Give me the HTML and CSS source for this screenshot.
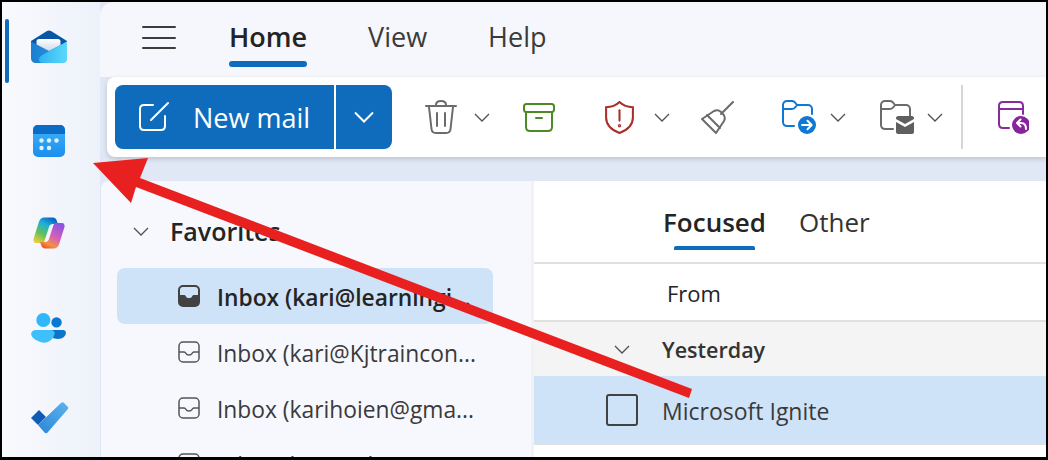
FILE: index.html
```html
<!DOCTYPE html>
<html lang="en">
<head>
<meta charset="utf-8">
<title>Outlook</title>
<link rel="stylesheet" href="styles.css">
</head>
<body>
<div class="app">
  <nav class="rail">
    <span class="rail-marker"></span>
    <a class="rail-item rail-mail">
      <svg width="38" height="34" viewBox="0 0 38 34"><defs><linearGradient id="mf" x1="0" x2="1"><stop offset="0" stop-color="#1b7fd0"/><stop offset="1" stop-color="#2b9be6"/></linearGradient><linearGradient id="mb" x1="0" x2="1"><stop offset="0" stop-color="#2fb4f2"/><stop offset="1" stop-color="#5cd8fb"/></linearGradient><linearGradient id="mp" x1="0" x2="0" y1="0" y2="1"><stop offset="0" stop-color="#fff"/><stop offset="1" stop-color="#c9d6e6"/></linearGradient></defs><path d="M1 11 17 1c1.300-.800 2.700-.800 4 0l16 10v12H1z" fill="#0b56a4"/><path d="M7 9.500c0-1.400 1-2.500 2.500-2.500h19c1.500 0 2.500 1.100 2.500 2.500V20H7z" fill="url(#mp)" transform="translate(-.5 2)"/><path d="M1 11.500 19 21l18-9.500V28c0 3-2 5-5 5H6c-3 0-5-2-5-5z" fill="url(#mf)"/><path d="M37 11.500V28c0 3-2 5-5 5H14c-3 0-5-.800-5-3.500 0-2 1.200-3.500 3-4.300z" fill="url(#mb)"/></svg>
    </a>
    <a class="rail-item rail-cal">
      <svg width="34" height="34" viewBox="0 0 34 34"><defs><linearGradient id="cb" x1="0" x2="0" y1="0" y2="1"><stop offset="0" stop-color="#3fb4f8"/><stop offset="1" stop-color="#1c8eee"/></linearGradient></defs><rect x="1" y="1" width="32" height="32" rx="5" fill="url(#cb)"/><path d="M1 10V6c0-3 2-5 5-5h22c3 0 5 2 5 5v4z" fill="#0a6cc4"/><g fill="#dff3ff"><circle cx="9.500" cy="16.500" r="2.200"/><circle cx="17" cy="16.500" r="2.200"/><circle cx="24.500" cy="16.500" r="2.200"/><circle cx="9.500" cy="24" r="2.200"/><circle cx="17" cy="24" r="2.200"/></g></svg>
    </a>
    <a class="rail-item rail-copilot">
      <svg width="32" height="32" viewBox="0 0 32 32"><defs><linearGradient id="c1" x1=".7" x2=".2" y1="0" y2="1"><stop offset="0" stop-color="#0b63c4"/><stop offset=".3" stop-color="#1fb0d8"/><stop offset=".65" stop-color="#62bf5a"/><stop offset="1" stop-color="#e8cf3c"/></linearGradient><linearGradient id="c2" x1=".7" x2=".2" y1="0" y2="1"><stop offset="0" stop-color="#8d55e2"/><stop offset=".5" stop-color="#d760b4"/><stop offset=".8" stop-color="#f4923f"/><stop offset="1" stop-color="#e8502c"/></linearGradient></defs><path d="M11 .5h9c1.500 0 3 1 3.500 2.500L25 7h-5c-2 0-3.500 1.300-4 3l-4.500 14c-.500 1-1.500 2-3 2H3c-2 0-3-2-2.500-4L6 4.500C7 2 9 .5 11 .5z" fill="url(#c1)"/><path d="M21 31.500h-9c-1.500 0-3-1-3.500-2.500L7 25h5c2 0 3.500-1.300 4-3l4.500-14c.500-1 1.500-2 3-2H29c2 0 3 2 2.500 4L26 27.500c-1 2.500-3 4-5 4z" fill="url(#c2)"/></svg>
    </a>
    <a class="rail-item rail-people">
      <svg width="36" height="32" viewBox="0 0 38 34"><defs><linearGradient id="pb" x1="0" x2="1"><stop offset="0" stop-color="#0a6cc4"/><stop offset="1" stop-color="#0a78d0"/></linearGradient></defs><circle cx="27" cy="10" r="5.500" fill="#0a78d0"/><path d="M18 18h15c2 0 4 .500 4 3 0 4-4 6.500-8.500 6.500S18 26 18 18z" fill="url(#pb)"/><circle cx="13" cy="7.500" r="7.500" fill="#30b6fb"/><path d="M5 18h16c2.500 0 4 1.500 4 3 0 6-6 10.500-11 10.500S0 27 0 22c0-2 2-4 5-4z" fill="#3fc0fd"/></svg>
    </a>
    <a class="rail-item rail-todo">
      <svg width="40" height="32" viewBox="0 0 40 32"><defs><linearGradient id="tg" x1="1" x2="0" y1="0" y2="1"><stop offset="0" stop-color="#5cb4ec"/><stop offset="1" stop-color="#2a86d8"/></linearGradient></defs><path d="M2 16 10 8l7 7-8 8z" fill="#0f5cb8"/><path d="M9 23 32 1c1-1 2-1 3 0l3.500 3.500c1 1 1 2 0 3L19 30c-1 1.500-2.500 1.500-3.500 .5z" fill="url(#tg)"/></svg>
    </a>
  </nav>
  <main class="main">
    <header class="tabs">
      <button class="menu-button" aria-label="Menu"><span></span><span></span><span></span></button>
      <div class="tab tab-active">Home</div>
      <div class="tab">View</div>
      <div class="tab">Help</div>
    </header>
    <section class="toolbar">
      <div class="new-mail">
        <div class="new-mail-main">
          <svg width="32" height="32" viewBox="0 0 32 32" fill="none" stroke="#fff" stroke-width="2" stroke-linecap="round"><path d="M15 4H6C3.500 4 2 5.500 2 8v17c0 2.500 1.500 4 4 4h17c2.500 0 4-1.500 4-4V15"/><path d="M13 19 30 2"/></svg>
          <span>New mail</span>
        </div>
        <div class="new-mail-split"><svg class="chev" width="20" height="12" viewBox="0 0 20 12" fill="none" stroke="#fff" stroke-width="2"><path d="M1 1.500 10 10.500 19 1.500"/></svg></div>
      </div>
      <div class="tool tool-trash">
        <svg width="32" height="34" viewBox="0 0 32 34" fill="none" stroke="#6b6b6b" stroke-width="2" stroke-linecap="round"><path d="M1 6h30M11 5c0-3 2-4 5-4s5 1 5 4M4 7l2.500 22c.200 2.500 2 4 4.500 4h10c2.500 0 4.300-1.500 4.500-4L28 7M12 13v13M20 13v13"/></svg>
        <svg class="caret" width="16" height="9" viewBox="0 0 16 9" fill="none" stroke="#505050" stroke-width="1.300"><path d="M1 1l7 7 7-7"/></svg>
      </div>
      <div class="tool tool-archive">
        <svg width="32" height="29" viewBox="0 0 32 29" fill="none" stroke="#4e8a24" stroke-width="2" stroke-linecap="round"><rect x="1" y="1" width="30" height="8" rx="2.500"/><path d="M3 9v15c0 2.500 1.500 4 4 4h18c2.500 0 4-1.500 4-4V9M13 15h6"/></svg>
      </div>
      <div class="tool tool-shield">
        <svg width="29" height="33" viewBox="0 0 28 32" fill="none" stroke="#a92f2a" stroke-width="2" stroke-linecap="round"><path d="M14 1c3 3 7 5 13 5v10c0 7-5 12-13 15C6 28 1 23 1 16V6c6 0 10-2 13-5z"/><path d="M14 9v10"/><circle cx="14" cy="24" r=".6"/></svg>
        <svg class="caret" width="16" height="9" viewBox="0 0 16 9" fill="none" stroke="#505050" stroke-width="1.300"><path d="M1 1l7 7 7-7"/></svg>
      </div>
      <div class="tool tool-broom">
        <svg width="33" height="33" viewBox="0 0 33 33" fill="none" stroke="#6b6b6b" stroke-width="2" stroke-linecap="round" stroke-linejoin="round"><path d="M32 1 20 13M1 18l12-8c2-1 5-1 7 1l2 2c2 2 2 5 1 7l-8 12zM6 14l13 13"/></svg>
      </div>
      <div class="tool tool-move">
        <svg width="34" height="34" viewBox="0 0 34 34" fill="none"><path d="M12 26H5c-2.300 0-4-1.500-4-4V5c0-2.300 1.700-4 4-4h5c1.500 0 2.500.600 3.500 2l1.500 2h11c2.300 0 4 1.700 4 4v5M1 9h9c1.500 0 2.500-.500 3.500-2L15 5" stroke="#0f78d4" stroke-width="2" stroke-linecap="round"/><circle cx="25" cy="25" r="9" fill="#0f78d4"/><path d="M20 25h9M25.500 20.800 29.700 25l-4.200 4.200" stroke="#fff" stroke-width="2" stroke-linecap="round" stroke-linejoin="round"/></svg>
        <svg class="caret" width="16" height="9" viewBox="0 0 16 9" fill="none" stroke="#505050" stroke-width="1.300"><path d="M1 1l7 7 7-7"/></svg>
      </div>
      <div class="tool tool-envelope">
        <svg width="34" height="34" viewBox="0 0 34 34" fill="none"><path d="M13 29H5c-2.300 0-4-1.500-4-4V5c0-2.300 1.700-4 4-4h5c1.500 0 2.500.600 3.500 2l1.500 2h11c2.300 0 4 1.700 4 4v7M1 9h9c1.500 0 2.500-.500 3.500-2L15 5" stroke="#6b6b6b" stroke-width="2" stroke-linecap="round"/><path d="M16 18c0-1 1-2 2-2h14c1 0 2 1 2 2v1l-9 5-9-5z" fill="#5f5f5f"/><path d="M16 22l9 5 9-5v10c0 1-1 2-2 2H18c-1 0-2-1-2-2z" fill="#5f5f5f"/></svg>
        <svg class="caret" width="16" height="9" viewBox="0 0 16 9" fill="none" stroke="#505050" stroke-width="1.300"><path d="M1 1l7 7 7-7"/></svg>
      </div>
      <div class="tool-sep"></div>
      <div class="tool tool-snooze">
        <svg width="32" height="34" viewBox="0 0 32 34" fill="none"><path d="M12 28H6c-2.500 0-4-1.500-4-4V6c0-2.500 1.500-4 4-4h16c2.500 0 4 1.500 4 4v8M2 9h24" stroke="#8a2a9e" stroke-width="2" stroke-linecap="round"/><circle cx="24" cy="25" r="9" fill="#86259a"/><path d="M29 29c0-4-2-6-5-6h-3M23.500 19.500 20 23l3.500 3.500" stroke="#fff" stroke-width="2" stroke-linecap="round" stroke-linejoin="round"/></svg>
      </div>
    </section>
    <div class="panes">
      <aside class="folders">
        <div class="fav-head">
          <svg width="16" height="9" viewBox="0 0 16 9" fill="none" stroke="#505050" stroke-width="1.300"><path d="M1 1l7 7 7-7"/></svg>
          <span>Favorites</span>
        </div>
        <div class="folder folder-selected">
          <svg width="22" height="22" viewBox="0 0 22 22"><rect x="1" y="1" width="20" height="20" rx="4" fill="none" stroke="#424242" stroke-width="2"/><path d="M1 10h5c1 0 1.500 .500 2 1.500s1.500 1.500 3 1.500 2.500-.500 3-1.500 1-1.500 2-1.500h5v7c0 2.500-1.500 4-4 4H5c-2.500 0-4-1.500-4-4z" fill="#424242"/></svg>
          <span>Inbox (kari@learningi...</span>
        </div>
        <div class="folder">
          <svg width="22" height="22" viewBox="0 0 22 22" fill="none" stroke="#555" stroke-width="1.500"><rect x="1" y="1" width="20" height="20" rx="4"/><path d="M1 11h5c1 0 1.500 .500 2 1.500s1.500 1.500 3 1.500 2.500-.500 3-1.500 1-1.500 2-1.500h5"/></svg>
          <span>Inbox (kari@Kjtraincon...</span>
        </div>
        <div class="folder">
          <svg width="22" height="22" viewBox="0 0 22 22" fill="none" stroke="#555" stroke-width="1.500"><rect x="1" y="1" width="20" height="20" rx="4"/><path d="M1 11h5c1 0 1.500 .500 2 1.500s1.500 1.500 3 1.500 2.500-.500 3-1.500 1-1.500 2-1.500h5"/></svg>
          <span>Inbox (karihoien@gma...</span>
        </div>
        <div class="folder">
          <svg width="22" height="22" viewBox="0 0 22 22" fill="none" stroke="#555" stroke-width="1.500"><rect x="1" y="1" width="20" height="20" rx="4"/><path d="M1 11h5c1 0 1.500 .500 2 1.500s1.500 1.500 3 1.500 2.500-.500 3-1.500 1-1.500 2-1.500h5"/></svg>
          <span>Inbox (kari@Ohi</span>
        </div>
      </aside>
      <section class="list">
        <div class="list-tabs">
          <div class="list-tab list-tab-active">Focused</div>
          <div class="list-tab">Other</div>
        </div>
        <div class="list-from">From</div>
        <div class="list-group">
          <svg width="16" height="9" viewBox="0 0 16 9" fill="none" stroke="#505050" stroke-width="1.300"><path d="M1 1l7 7 7-7"/></svg>
          <span>Yesterday</span>
        </div>
        <div class="list-row">
          <span class="checkbox"></span>
          <span class="list-sender">Microsoft Ignite</span>
        </div>
      </section>
    </div>
  </main>
  <svg class="arrow" width="1048" height="460" viewBox="0 0 1048 460"><polygon points="93,163 148,158 140,178 692,389 689,398 136,187 131,203" fill="#e8201f"/></svg>
</div>
</body>
</html>
```
FILE: styles.css
```css
* { box-sizing: border-box; }
html, body { margin: 0; padding: 0; height: 100%; background: #000; overflow: hidden; }
body { padding: 2px; font-family: "Open Sans", "Noto Sans", sans-serif; color: #242424; }

.app {
  display: flex;
  width: 1044px;
  height: 455px;
  overflow: hidden;
  background: linear-gradient(135deg, #f8f9fe, #e7edf8);
}
.arrow { position: absolute; left: 0; top: 0; pointer-events: none; }

/* Rail */
.rail { position: relative; width: 98px; flex: none; display: flex; flex-direction: column; align-items: center; padding-right: 4px; background: linear-gradient(90deg, #f9fafe, #edf1f9); }
.rail-marker { position: absolute; left: 3px; top: 17px; width: 4px; height: 64px; border-radius: 2px; background: #0f6cbd; }
.rail-item { display: flex; justify-content: center; align-items: center; }
.rail-mail { margin-top: 28px; }
.rail-cal { margin-top: 60px; }
.rail-copilot { margin-top: 59px; }
.rail-people { margin-top: 64px; }
.rail-todo { margin-top: 57px; }

/* Main */
.main { flex: 1; min-width: 0; display: flex; flex-direction: column; background: #e0e7f5; }
.tabs { height: 75px; padding-left: 42px; display: flex; align-items: flex-start; background: #f5f7fc; border-top-left-radius: 14px; }
.menu-button { width: 34px; height: 23px; margin-top: 24px; padding: 0; border: 0; background: none; display: flex; flex-direction: column; justify-content: space-between; }
.menu-button span { display: block; height: 2px; background: #3c3c3c; border-radius: 1px; }
.tab { font-size: 27px; line-height: 36px; margin-top: 17px; height: 48px; color: #3b3b3b; margin-left: 61px; }
.tab:nth-child(2) { margin-left: 53px; }
.tab-active { position: relative; font-weight: 600; color: #242424; }
.tab-active::after { content: ""; position: absolute; left: 0; right: 0; top: 42px; height: 6px; border-radius: 3px; background: #0f6cbd; }

.toolbar { height: 80px; margin-left: 7px; display: flex; align-items: center; padding-left: 8px; background: #fff; border-top-left-radius: 8px; border-bottom-left-radius: 8px; box-shadow: 0 2px 5px rgba(0,0,0,.16); position: relative; overflow: hidden; }
.new-mail { display: flex; height: 64px; color: #fff; flex: none; }
.new-mail-main { width: 219px; display: flex; align-items: center; background: #0f6cbd; border-radius: 8px 0 0 8px; padding-left: 23px; font-size: 27px; gap: 23px; }
.new-mail-split { width: 56px; margin-left: 2px; display: flex; align-items: center; justify-content: center; background: #0f6cbd; border-radius: 0 8px 8px 0; }
.tool { display: flex; align-items: center; flex: none; }
.caret { margin-left: 17px; }
.tool-trash { margin-left: 33px; }
.tool-archive { margin-left: 33px; }
.tool-shield { margin-left: 50px; }
.tool-shield .caret { margin-left: 20px; }
.tool-broom { margin-left: 31px; }
.tool-move { margin-left: 48px; }
.tool-move .caret { margin-left: 14px; }
.tool-envelope { margin-left: 34px; }
.tool-envelope .caret { margin-left: 13px; }
.tool-sep { width: 2px; height: 64px; margin-left: 18px; flex: none; background: #d6d6d6; }
.tool-snooze { margin-left: 34px; }

/* Panes */
.panes { flex: 1; min-height: 0; margin-top: 24px; display: flex; }
.folders { width: 433px; flex: none; margin-left: 1px; padding-left: 16px; background: #f6f8fe; border-right: 3px solid #f1f2f4; border-top-left-radius: 8px; overflow: hidden; }
.fav-head { display: flex; align-items: center; height: 87px; padding: 13px 0 0 16px; font-size: 25px; font-weight: 600; gap: 21px; }
.folder { width: 376px; height: 56px; padding-left: 61px; display: flex; align-items: center; gap: 17px; font-size: 22.8px; color: #3a3a3a; white-space: nowrap; overflow: hidden; border-radius: 8px; }
.folder svg { flex: none; }
.folder span { padding-top: 3px; }
.folder-selected { background: #cfe3f8; font-weight: 600; color: #242424; }

.list { flex: 1; min-width: 0; background: #fff; }
.list-tabs { height: 83px; padding-left: 129px; display: flex; gap: 33px; border-bottom: 2px solid #e0e0e0; }
.list-tab { position: relative; font-size: 26px; line-height: 36px; margin-top: 23px; color: #333; }
.list-tab-active { font-weight: 600; color: #242424; }
.list-tab-active::after { content: ""; position: absolute; left: 11px; right: 11px; top: 42px; height: 4px; border-radius: 2px 2px 0 0; background: #0f6cbd; }
.list-from { height: 58px; padding: 1px 0 0 133px; display: flex; align-items: center; font-size: 22px; border-bottom: 2px solid #e0e0e0; }
.list-group { height: 54px; padding: 1px 0 0 80px; display: flex; align-items: center; gap: 32px; font-size: 21.5px; font-weight: 600; background: #f4f4f4; color: #333; }
.list-row { height: 69px; padding-left: 72px; display: flex; align-items: center; gap: 24px; font-size: 23px; color: #3a3a3a; background: #cfe3f8; border-bottom: 2px solid #e0e0e0; }
.list-sender { padding-top: 2px; }
.checkbox { width: 32px; height: 32px; border: 2px solid #424242; border-radius: 3px; flex: none; }
```
